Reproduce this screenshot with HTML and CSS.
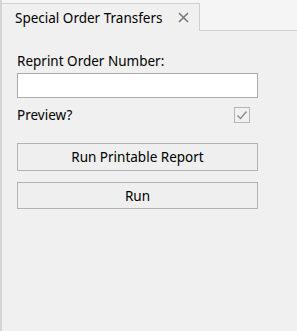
FILE: index.html
```html
<!DOCTYPE html>
<html lang="en">
<head>
  <meta charset="UTF-8" />
  <title>Special Order Transfers</title>
  <link rel="stylesheet" href="styles.css">
</head>
<body>
  <div class="pane">
    <div class="tabs">
      <div class="tab">
        <span>Special Order Transfers</span>
        <svg class="close" width="11" height="11" viewBox="0 0 11 11"><path d="M1 1 L10 10 M10 1 L1 10" stroke="#7a7a7a" stroke-width="1.6"/></svg>
      </div>
    </div>
    <form class="panel">
      <label for="order">Reprint Order Number:</label>
      <input type="text" id="order" />
      <div class="row">
        <span>Preview?</span>
        <span class="check">
          <svg width="12" height="12" viewBox="0 0 12 12"><path d="M1.5 6.5 L4.5 9.5 L10.5 2.5" fill="none" stroke="#8a8a8a" stroke-width="1.3"/></svg>
        </span>
      </div>
      <button type="button">Run Printable Report</button>
      <button type="button">Run</button>
    </form>
  </div>
</body>
</html>
```

FILE: styles.css
```css
body {
  margin: 0;
  font-family: "Noto Sans", "Open Sans", sans-serif;
  font-size: 13.5px;
  color: #000;
  background: #f0f0f0;
}
.pane {
  height: 331px;
  border-left: 2px solid #d4d4d4;
  box-sizing: border-box;
  background: #f0f0f0;
}
.tabs {
  height: 31px;
  padding-top: 3px;
  box-sizing: border-box;
  background: #f5f5f5;
  border-bottom: 1px solid #cfcfcf;
  display: flex;
}
.tab {
  width: 198px;
  height: 28px;
  box-sizing: border-box;
  border: 1px solid #cfcfcf;
  border-left: none;
  border-bottom: none;
  background: #f0f0f0;
  display: flex;
  align-items: center;
  padding-left: 13px;
  gap: 15px;
}
.panel {
  display: flex;
  flex-direction: column;
  padding: 21px 39px 0 15px;
}
label {
  line-height: 18px;
}
input {
  margin-top: 3px;
  height: 25px;
  box-sizing: border-box;
  border: 1px solid #ababab;
  background: #fff;
  font: inherit;
}
.row {
  display: flex;
  justify-content: space-between;
  align-items: center;
  margin-top: 8px;
  padding-right: 8px;
}
.check {
  width: 16px;
  height: 16px;
  box-sizing: border-box;
  border: 1px solid #b5b5b5;
  display: flex;
  align-items: center;
  justify-content: center;
}
button {
  font: inherit;
  color: inherit;
  height: 28px;
  border: 1px solid #b3b3b3;
  background: #efefef;
  padding: 0;
}
button + button {
  margin-top: 11px;
  height: 27px;
}
.row + button {
  margin-top: 19px;
}
```
